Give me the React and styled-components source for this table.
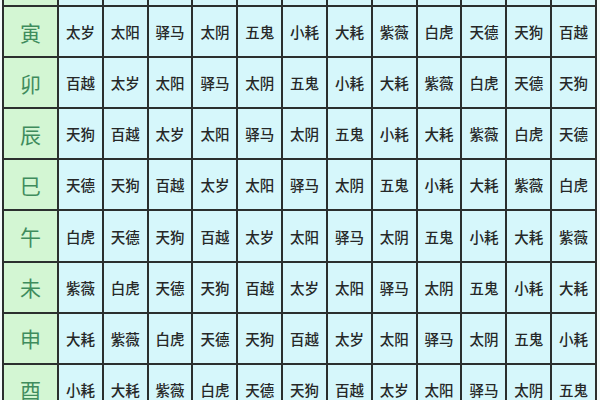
import React from "react";
import styled, { createGlobalStyle } from "styled-components";

const Global = createGlobalStyle`
  html, body { margin: 0; padding: 0; background: #ffffff; }
  body { width: 600px; height: 400px; overflow: hidden; }
`;

const Page = styled.div`
  width: 600px;
  height: 400px;
  overflow: hidden;
  padding-left: 2px;
  box-sizing: border-box;
  background: #f4fbfb;
`;

const Grid = styled.div`
  display: grid;
  width: 595px;
  box-sizing: border-box;
  margin-top: -46px;
  grid-template-columns: 53px repeat(12, 1fr);
  grid-auto-rows: 49.1px;
  gap: 2px;
  padding: 2px;
  background: #2b2f2e;
`;

const Branch = styled.div`
  display: flex;
  align-items: center;
  justify-content: center;
  background: #d3f6d3;
  color: #3f8c5d;
  font-family: "Noto Sans CJK SC", "Noto Sans", sans-serif;
  font-size: 21px;
`;

const Cell = styled.div`
  display: flex;
  align-items: center;
  justify-content: center;
  background: #d6f7fb;
  color: #262828;
  font-family: "Noto Sans CJK SC", "Noto Sans", sans-serif;
  font-size: 14.5px;
  font-weight: 500;
  white-space: nowrap;
`;

const cycle = ["太岁", "太阳", "驿马", "太阴", "五鬼", "小耗", "大耗", "紫薇", "白虎", "天德", "天狗", "百越"];
const branches = ["", "寅", "卯", "辰", "巳", "午", "未", "申", "酉"];

export default function App() {
  return (
    <>
      <Global />
      <Page>
        <Grid>
          {branches.map((b, r) => {
            const k = r - 1;
            const hidden = r === 0;
            return (
              <React.Fragment key={r}>
                <Branch>{b}</Branch>
                {cycle.map((_, j) => (
                  <Cell key={j}>{hidden ? "" : cycle[(((j - k) % 12) + 12) % 12]}</Cell>
                ))}
              </React.Fragment>
            );
          })}
        </Grid>
      </Page>
    </>
  );
}
